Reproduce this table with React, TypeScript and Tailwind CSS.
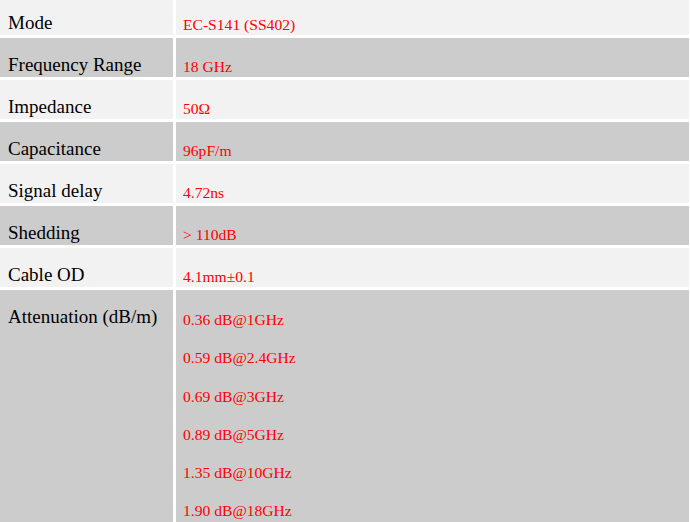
const specs: { label: string; value: string[] }[] = [
  { label: "Mode", value: ["EC-S141 (SS402)"] },
  { label: "Frequency Range", value: ["18 GHz"] },
  { label: "Impedance", value: ["50Ω"] },
  { label: "Capacitance", value: ["96pF/m"] },
  { label: "Signal delay", value: ["4.72ns"] },
  { label: "Shedding", value: ["> 110dB"] },
  { label: "Cable OD", value: ["4.1mm±0.1"] },
  {
    label: "Attenuation (dB/m)",
    value: [
      "0.36 dB@1GHz",
      "0.59 dB@2.4GHz",
      "0.69 dB@3GHz",
      "0.89 dB@5GHz",
      "1.35 dB@10GHz",
      "1.90 dB@18GHz",
    ],
  },
]

export default function App() {
  return (
    <div className="h-[522px] w-[690px] overflow-hidden bg-white font-['Liberation_Serif','Times_New_Roman',serif]">
      <div className="mt-[-4px] grid grid-cols-[173px_513px] gap-[3px]">
        {specs.map((row, i) => {
          const bg = i % 2 === 0 ? "bg-[#f2f2f2]" : "bg-[#cccccc]"
          const multi = row.value.length > 1
          return [
            <div key={`l${i}`} className={`${bg} min-h-[39px] pl-[8px] pt-[15px] text-[19px] leading-[24px] text-black`}>
              {row.label}
            </div>,
            <div
              key={`r${i}`}
              className={`${bg} flex min-h-[39px] flex-col gap-[18.3px] pl-[7px] text-[15.6px] leading-[20px] text-[#ff0000] ${
                multi ? "pt-[20px] pb-[30px]" : "pt-[19px]"
              }`}
            >
              {row.value.map((v) => (
                <div key={v}>{v}</div>
              ))}
            </div>,
          ]
        })}
      </div>
    </div>
  )
}
